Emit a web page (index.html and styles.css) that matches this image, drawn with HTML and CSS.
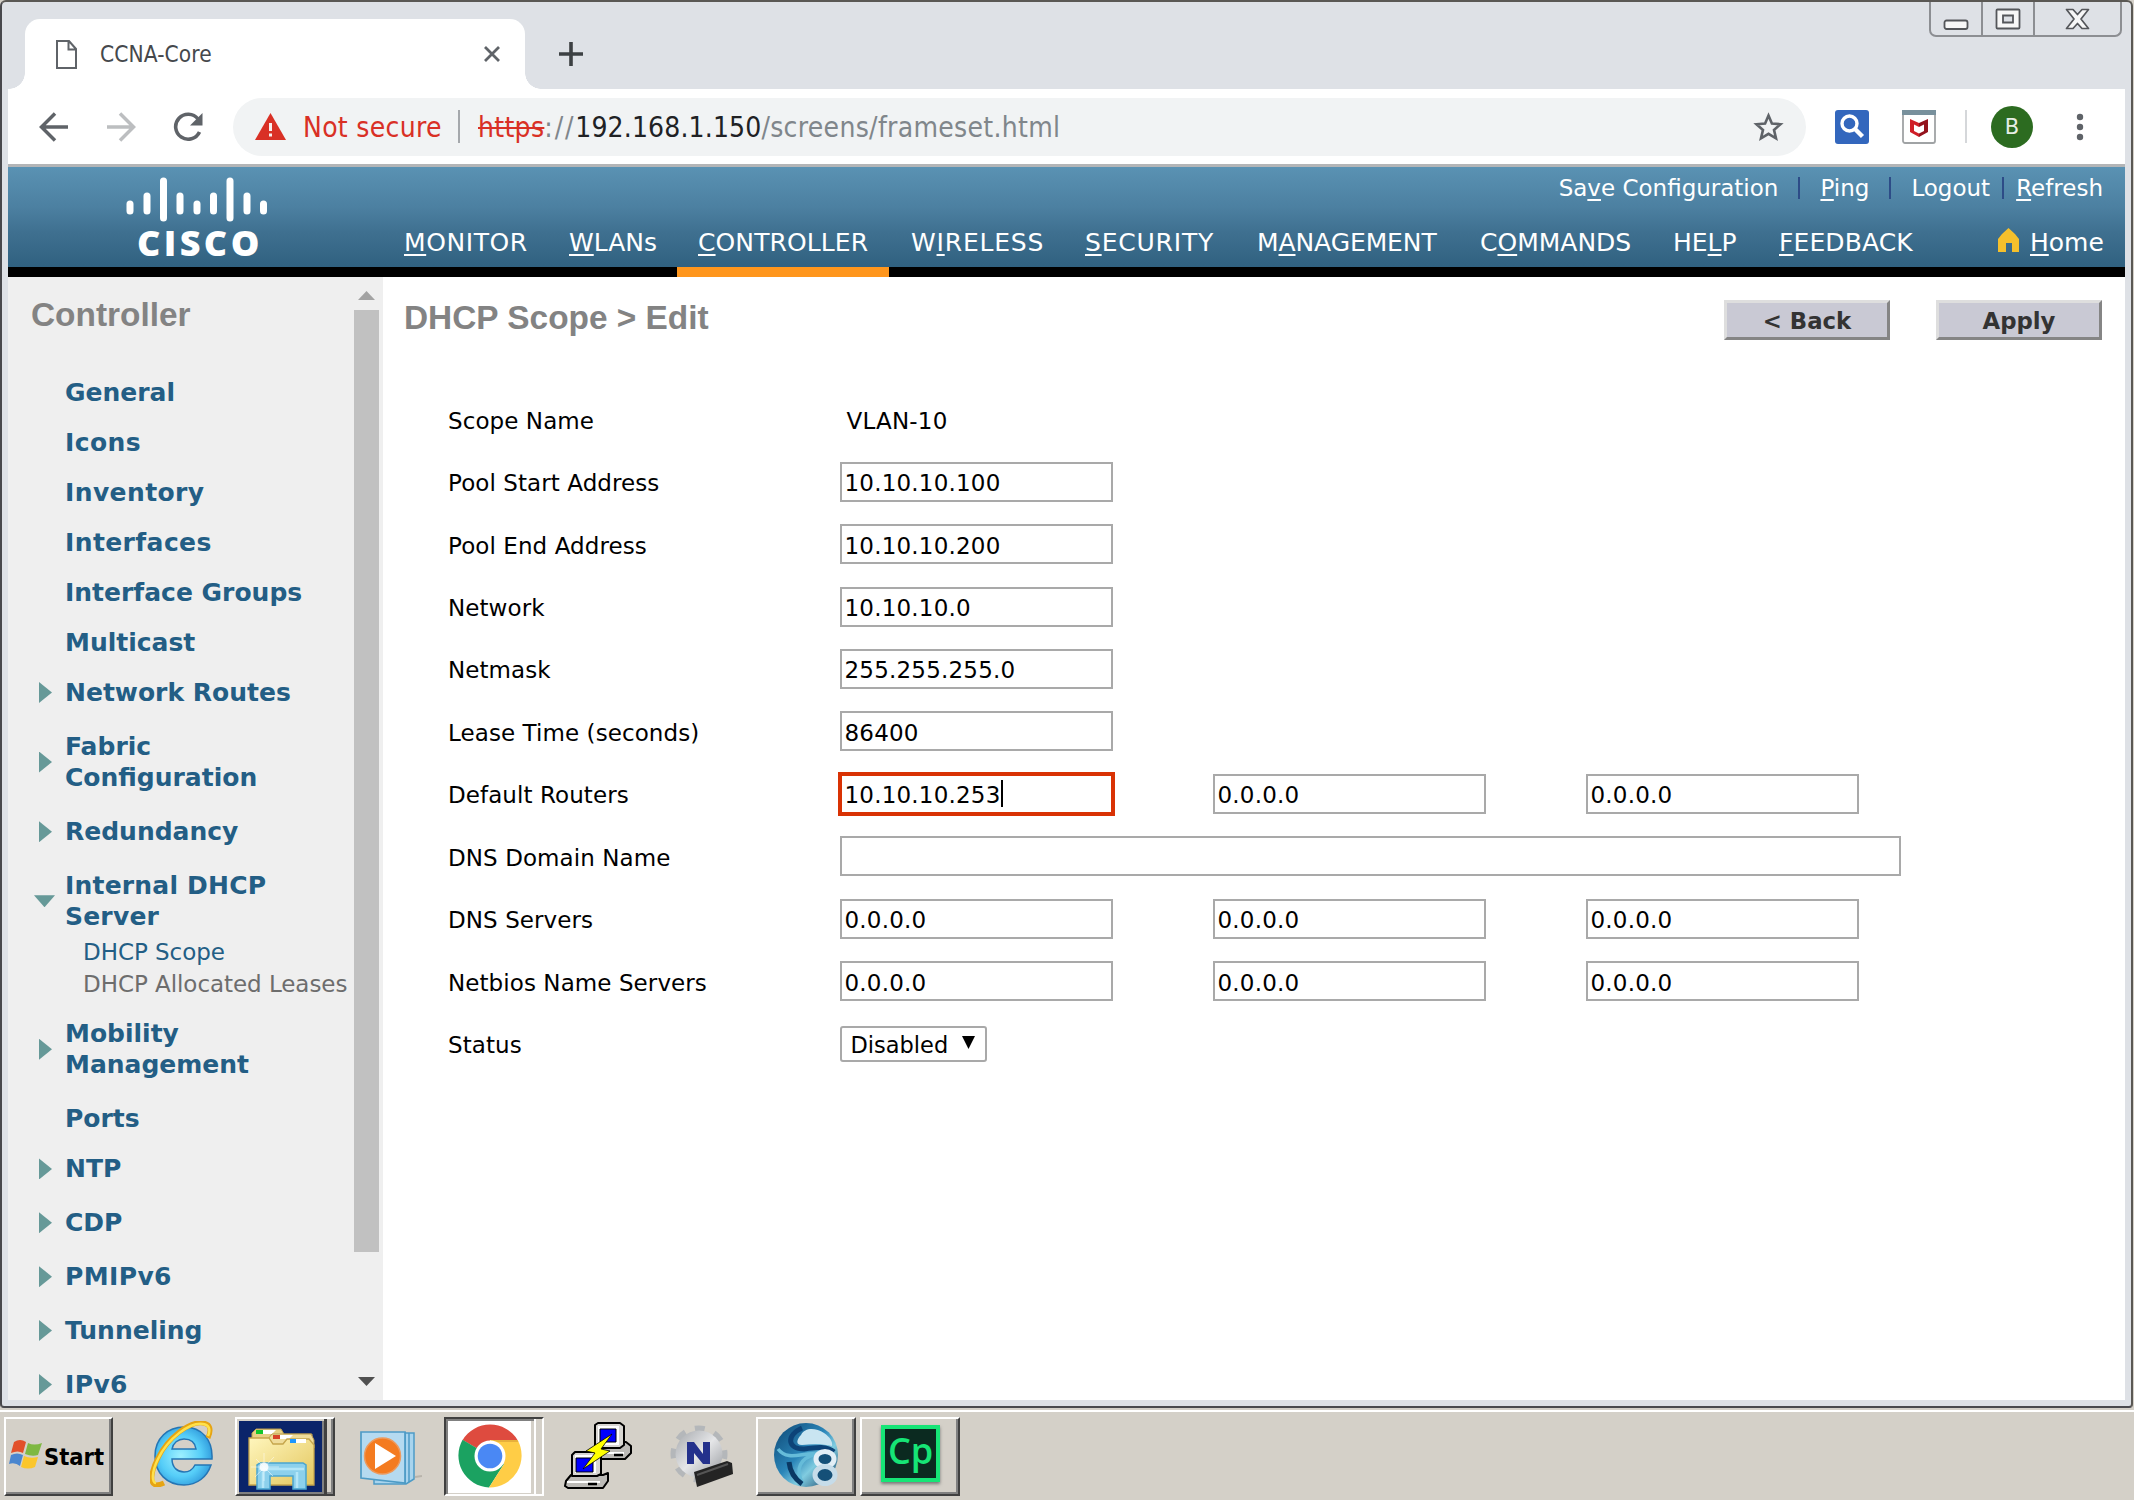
FILE: index.html
```html
<!DOCTYPE html>
<html lang="en">
<head>
<meta charset="utf-8">
<title>CCNA-Core</title>
<link rel="stylesheet" href="styles.css">
</head>
<body>
<div class="window">
  <div class="tabstrip">
    <div class="tab">
      <svg class="doc-icon" width="21" height="29" viewBox="0 0 21 29"><path d="M1 1H13L20 9V28H1ZM12.5 1V9.500H20" fill="none" stroke="#5f6368" stroke-width="2"/></svg>
      <span class="tab-title">CCNA-Core</span>
      <svg class="tab-close" width="18" height="18" viewBox="0 0 18 18"><path d="M2 2L16 16M16 2L2 16" stroke="#5f6368" stroke-width="2.800"/></svg>
    </div>
    <svg class="new-tab" width="26" height="26" viewBox="0 0 26 26"><path d="M13 1V25M1 13H25" stroke="#3c4043" stroke-width="3.600"/></svg>
    <div class="controls">
      <div class="ctl ctl-min"><svg width="26" height="12" viewBox="0 0 26 12"><rect x="1.500" y="1.500" width="23" height="8.500" rx="2" fill="#f7f7f7" stroke="#54565a" stroke-width="1.800"/></svg></div>
      <div class="ctl ctl-max"><svg width="26" height="22" viewBox="0 0 26 22"><path d="M1.500 2.500Q1.500 1.500 2.500 1.500H23.500Q24.500 1.500 24.500 2.500V19.500Q24.500 20.500 23.500 20.500H2.500Q1.500 20.500 1.500 19.500ZM8 7.500V14.500H18V7.500Z" fill="#f7f7f7" fill-rule="evenodd" stroke="#54565a" stroke-width="1.800"/></svg></div>
      <div class="ctl ctl-close"><svg width="25" height="22" viewBox="0 0 25 22"><path d="M1.500 1.500H8L12.500 6.500L17 1.500H23.500L16 11L23.500 20.500H17L12.500 15.500L8 20.500H1.500L9 11Z" fill="#f7f7f7" stroke="#54565a" stroke-width="1.700" stroke-linejoin="round"/></svg></div>
    </div>
  </div>

  <div class="toolbar">
    <svg class="tb-icon" width="30" height="30" viewBox="0 0 30 30"><path d="M29 15H3M16 1.500L2.500 15L16 28.500" fill="none" stroke="#5f6368" stroke-width="3.500"/></svg>
    <svg class="tb-icon tb-forward" width="30" height="30" viewBox="0 0 30 30"><path d="M1 15H27M14 1.500L27.500 15L14 28.500" fill="none" stroke="#bcbec0" stroke-width="3.500"/></svg>
    <svg class="tb-icon" width="30" height="30" viewBox="0 0 30 30"><path d="M26.500 20A12.500 12.500 0 1 1 25 7" fill="none" stroke="#5f6368" stroke-width="3.600"/><path d="M29.500 1V13.500H17Z" fill="#5f6368"/></svg>
    <div class="omnibox">
      <svg width="31" height="27" viewBox="0 0 31 27"><path d="M15.500 0L31 27H0Z" fill="#d93025"/><path d="M15.500 10V18M15.500 20.500V23.500" stroke="#f8f0ef" stroke-width="3"/></svg>
      <span class="not-secure">Not secure</span>
      <span class="omni-sep"></span>
      <span class="url"><s>https</s><span class="scheme-sep">://</span><b>192.168.1.150</b>/screens/frameset.html</span>
      <svg class="star" width="31" height="30" viewBox="0 0 31 30"><path d="M15.500 3.500L18.900 11.500L27.500 12.200L21 17.900L23 26.300L15.500 21.800L8 26.300L10 17.900L3.500 12.200L12.100 11.500Z" fill="none" stroke="#5f6368" stroke-width="2.600"/></svg>
    </div>
    <svg class="ext-search" width="34" height="34" viewBox="0 0 34 34"><rect width="34" height="34" rx="3" fill="#3367bd"/><circle cx="14.500" cy="13.500" r="7.500" fill="none" stroke="#fff" stroke-width="3.400"/><path d="M19.500 18.500L27.500 26.500" stroke="#fff" stroke-width="4.500"/></svg>
    <svg class="ext-shield" width="34" height="34" viewBox="0 0 34 34"><rect x="1" y="1" width="32" height="32" rx="2" fill="#fff" stroke="#a0a3a5" stroke-width="1.800"/><rect width="34" height="5" fill="#78909c"/><path d="M8 9L17 13V17L12 14.500V21L17 23.500V27L8 22Z" fill="#d01f28"/><path d="M26 9L17 13V17L22 14.500V21L17 23.500V27L26 22Z" fill="#94131d"/></svg>
    <span class="tb-sep"></span>
    <span class="avatar">B</span>
    <svg class="kebab" width="8" height="30" viewBox="0 0 8 30"><circle cx="4" cy="5" r="3.200" fill="#5f6368"/><circle cx="4" cy="15" r="3.200" fill="#5f6368"/><circle cx="4" cy="25" r="3.200" fill="#5f6368"/></svg>
  </div>

  <header class="banner">
    <div class="logo">
      <svg width="142" height="46" viewBox="0 0 142 46"><g stroke="#fff" stroke-width="7" stroke-linecap="round"><path d="M4 27V34M21 19V34M37.500 4V41M54 19V34M71 27V34M87.500 19V34M104 4V41M121 19V34M137.500 27V34"/></g></svg>
      <span class="logo-name">CISCO</span>
    </div>
    <div class="banner-main">
      <div class="util">
        <a>Sa<u>v</u>e Configuration</a><i></i><a><u>P</u>ing</a><i></i><a>Logout</a><i class="tight"></i><a><u>R</u>efresh</a>
      </div>
      <nav class="menu">
        <a class="m-monitor"><u>M</u>ONITOR</a>
        <a class="m-wlans"><u>W</u>LANs</a>
        <a class="m-controller"><u>C</u>ONTROLLER</a>
        <a class="m-wireless">W<u>I</u>RELESS</a>
        <a class="m-security"><u>S</u>ECURITY</a>
        <a class="m-management">M<u>A</u>NAGEMENT</a>
        <a class="m-commands">C<u>O</u>MMANDS</a>
        <a class="m-help">HE<u>L</u>P</a>
        <a class="m-feedback"><u>F</u>EEDBACK</a>
        <svg class="home-icon" width="21" height="24" viewBox="0 0 21 24"><path d="M10.500 0L17 6L21 11V24H14V15H8V24H0V11L4 6Z" fill="#f5c02c"/></svg>
        <a class="m-home"><u>H</u>ome</a>
      </nav>
    </div>
  </header>
  <div class="rule"><span class="rule-active"></span></div>

  <div class="frames">
    <aside class="sidebar">
      <div class="side-body">
        <h2>Controller</h2>
        <ul class="tree">
          <li>General</li>
          <li class="loose">Icons</li>
          <li class="loose">Inventory</li>
          <li class="loose">Interfaces</li>
          <li>Interface Groups</li>
          <li>Multicast</li>
          <li class="closed">Network Routes</li>
          <li class="closed">Fabric<br>Configuration</li>
          <li class="closed">Redundancy</li>
          <li class="open">Internal DHCP<br>Server</li>
          <li class="sub"><a>DHCP Scope</a><a class="dim">DHCP Allocated Leases</a></li>
          <li class="closed">Mobility<br>Management</li>
          <li>Ports</li>
          <li class="closed">NTP</li>
          <li class="closed">CDP</li>
          <li class="closed loose">PMIPv6</li>
          <li class="closed">Tunneling</li>
          <li class="closed loose">IPv6</li>
        </ul>
      </div>
      <div class="scrollbar">
        <span class="arrow-up"></span>
        <span class="thumb"></span>
        <span class="arrow-down"></span>
      </div>
    </aside>
    <main class="content">
      <div class="title-row">
        <h1>DHCP Scope &gt; Edit</h1>
        <button>&lt; Back</button>
        <button>Apply</button>
      </div>
      <div class="form">
        <div class="row"><label>Scope Name</label><span class="plain">VLAN-10</span></div>
        <div class="row"><label>Pool Start Address</label><div class="field">10.10.10.100</div></div>
        <div class="row"><label>Pool End Address</label><div class="field">10.10.10.200</div></div>
        <div class="row"><label>Network</label><div class="field">10.10.10.0</div></div>
        <div class="row"><label>Netmask</label><div class="field">255.255.255.0</div></div>
        <div class="row"><label>Lease Time (seconds)</label><div class="field">86400</div></div>
        <div class="row"><label>Default Routers</label><div class="field focus">10.10.10.253<span class="caret"></span></div><div class="field">0.0.0.0</div><div class="field">0.0.0.0</div></div>
        <div class="row"><label>DNS Domain Name</label><div class="field wide"></div></div>
        <div class="row"><label>DNS Servers</label><div class="field">0.0.0.0</div><div class="field">0.0.0.0</div><div class="field">0.0.0.0</div></div>
        <div class="row"><label>Netbios Name Servers</label><div class="field">0.0.0.0</div><div class="field">0.0.0.0</div><div class="field">0.0.0.0</div></div>
        <div class="row"><label>Status</label><div class="select">Disabled<svg width="13" height="13" viewBox="0 0 13 13"><path d="M0 0H13L6.500 13Z" fill="#000"/></svg></div></div>
      </div>
    </main>
  </div>
</div>

<footer class="taskbar">
  <div class="start raised">
    <svg width="33" height="30" viewBox="0 0 33 30">
      <path d="M5 3Q11-1 17 3L14 14Q9 11 2 14Z" fill="#e2502a"/>
      <path d="M19 4Q25 7 33 4L29 16Q23 18 16 15Z" fill="#7eb842"/>
      <path d="M2 16Q8 13 14 16L11 27Q6 23 0 25Z" fill="#4a86cf"/>
      <path d="M15 17Q21 20 29 18L26 28Q19 31 12 28Z" fill="#fbc62c"/>
    </svg>
    <span>Start</span>
  </div>
  <svg class="ie" width="63" height="66" viewBox="0 0 63 66">
    <defs><radialGradient id="ieBlue" cx=".45" cy=".5" r=".6"><stop offset="0" stop-color="#9df0ff"/><stop offset=".6" stop-color="#55cdf8"/><stop offset="1" stop-color="#2b93d8"/></radialGradient></defs>
    <path d="M62 38H22C22 47 28 51 34 51C39 51 43 48 45 44H61C57 56 47 64 34 64C17 64 5 52 5 35C5 17 18 6 34 6C52 6 63 19 62 38ZM22 28H46C45 21 40 18 34 18C28 18 23 22 22 28Z" fill="url(#ieBlue)" stroke="#2575b4" stroke-width="1.500" fill-rule="evenodd"/>
    <path d="M58 17C62 8 60 3 53 2C40 0 18 16 8 37C0 52 0 63 6 64C10 64 12 63 14 62" fill="none" stroke="#e6a413" stroke-width="5"/>
    <path d="M58 15C61 8 59 4 53 3C40 1 18 17 8 38C1 52 2 62 6 62" fill="none" stroke="#ffe14a" stroke-width="2.500"/>
  </svg>
  <div class="group explorer">
    <div class="navy">
      <svg width="68" height="62" viewBox="0 0 68 62">
        <defs><linearGradient id="folder" x2="1" y2="1"><stop offset="0" stop-color="#fff6bd"/><stop offset="1" stop-color="#e3c65d"/></linearGradient></defs>
        <path d="M4 5L8 1H33L36 6H64V20H4Z" fill="#e5cf85" stroke="#b99b4e"/>
        <rect x="8" y="2" width="7" height="4" fill="#12c72b"/><path d="M15 2H28L24 6H15Z" fill="#fff"/>
        <path d="M20 11L24 6H63L66 12V20H20Z" fill="#efdc9a" stroke="#b99b4e"/>
        <rect x="25" y="7" width="7" height="4" fill="#d7432a"/><path d="M32 7H45L41 11H32Z" fill="#fff"/>
        <path d="M1 10H21L25 16H35L39 11H61L66 17V57H1Z" fill="url(#folder)" stroke="#c5a54c" stroke-width="1.300"/>
        <rect x="42" y="11" width="6" height="4" fill="#1c96ff"/><rect x="48" y="11" width="10" height="4" fill="#fff"/>
        <path d="M9 61V37L12 35H55L58 37V61H45V48H22V61Z" fill="#8cd0ec" stroke="#4aa5cf" stroke-width="1.500"/>
        <path d="M11 41H56M15 44V60M49 44V60" stroke="#b4e6f8" stroke-width="2.500" fill="none"/>
        <path d="M16 25V53M3 39H31M7 49L26 29M8 31L25 48" stroke="#fff" stroke-width="1" opacity=".5"/>
        <circle cx="16" cy="39" r="4.500" fill="#fff" opacity=".85"/>
      </svg>
    </div>
  </div>
  <svg class="wmp" width="62" height="54" viewBox="0 0 62 54">
    <path d="M14 2H54V48L46 53H14Z" fill="#a8d4ee" stroke="#4d9bc6" stroke-width="1.500"/>
    <path d="M49 2V51M45 1V53" stroke="#4d9bc6" stroke-width="1.500"/>
    <path d="M1 1H45V52L1 47Z" fill="#b5daf0" stroke="#4d9bc6" stroke-width="1.700"/>
    <circle cx="22.500" cy="25" r="18" fill="#f47b20" stroke="#ed9a5d" stroke-width="1.500"/>
    <path d="M15 12L36 25L15 38Z" fill="#fff"/><path d="M55 46L62 45" stroke="#b8b4ac" stroke-width="2"/>
  </svg>
  <div class="group pressed">
    <div class="white">
      <svg width="64" height="64" viewBox="0 0 64 64">
        <path d="M32 32L4.700 16A32 32 0 0 1 59.500 16H32Z" fill="#de4b3f"/>
        <path d="M32 32L4.600 15.700A32 32 0 0 0 31 63.500L46 40Z" fill="#1ba261"/>
        <path d="M32 16H59.600A32 32 0 0 1 31 63.500L46 40Z" fill="#ffcd46"/>
        <path d="M32 16H59.600L60.500 18H40Z" fill="#c98d2e" opacity=".45"/>
        <circle cx="32" cy="32" r="15.500" fill="#fff"/><circle cx="32" cy="32" r="12.300" fill="#4a88f4"/>
      </svg>
    </div>
  </div>
  <svg class="putty" width="68" height="68" viewBox="0 0 68 68" stroke="#000" stroke-width="2" stroke-linejoin="round">
    <path d="M31 25L36 20H62L67 24V31L61 37H31Z" fill="#bdbbb7"/>
    <path d="M31 3L34 1H56L60 4V23L56 26H31Z" fill="#d8d6d2"/>
    <path d="M34 4H55V23H34Z" fill="#fff" stroke="none"/><path d="M36 7H52V20H36Z" fill="#00f" stroke="#000" stroke-width="1"/>
    <path d="M2 59L7 53H39L44 51V59L39 66H4L1 64Z" fill="#bdbbb7"/>
    <path d="M8 33L11 30H33L37 33V52L33 54H8Z" fill="#d8d6d2"/>
    <path d="M11 33H32V51H11Z" fill="#fff" stroke="none"/><path d="M12 36H29V50H12Z" fill="#00f" stroke="#000" stroke-width="1"/>
    <path d="M3 60H36M33 31H60" stroke="#fff" fill="none"/><path d="M24 62H33M50 33H59" stroke="#000" stroke-width="2.500"/>
    <path d="M48 12L22 29L31 31L19 47L46 29L37 27Z" fill="#ff0" stroke="#000" stroke-width=".8"/>
  </svg>
  <svg class="gear" width="63" height="62" viewBox="0 0 63 62">
    <defs><linearGradient id="steel" x2="1" y2="1"><stop offset="0" stop-color="#a4a7ab"/><stop offset=".5" stop-color="#e5e6e8"/><stop offset="1" stop-color="#96999e"/></linearGradient></defs>
    <circle cx="29" cy="29" r="25.500" fill="none" stroke="#b4b7ba" stroke-width="6" stroke-dasharray="10 10.030" stroke-dashoffset="5"/>
    <circle cx="29" cy="29" r="23.500" fill="url(#steel)"/>
    <path d="M17 39V17H24L33 29V17H40V39H33L24 28V39Z" fill="#24318c"/>
    <path d="M24 47L57 36L62 38L63 49L27 62Z" fill="#242424"/><path d="M27 50L58 39" stroke="#555" stroke-width="2"/>
  </svg>
  <div class="app raised snagit">
    <svg width="67" height="66" viewBox="0 0 67 66">
      <defs><linearGradient id="ball" x2="1" y2="1"><stop offset="0" stop-color="#0d4673"/><stop offset=".45" stop-color="#2a85b8"/><stop offset=".65" stop-color="#80cce0"/><stop offset="1" stop-color="#0b3158"/></linearGradient></defs>
      <circle cx="33" cy="33" r="32" fill="url(#ball)"/>
      <path d="M28 13C32 5 43 6 51 11C57 15 60 20 59 24C51 22 40 22 29 23C22 23 24 17 28 13Z" fill="#c9e5f1"/>
      <path d="M29 6C13 13 14 27 31 27C44 25 54 24 61 30" fill="none" stroke="#0c4378" stroke-width="5"/>
      <path d="M5 27C15 40 30 30 43 32C28 36 21 46 30 62" fill="none" stroke="#66bcd9" stroke-width="3.500"/>
      <path d="M16 40C17 50 22 57 29 62" fill="none" stroke="#0a3863" stroke-width="5"/>
      <ellipse cx="52" cy="37" rx="9" ry="7.500" fill="#155078" stroke="#e2eef6" stroke-width="5"/>
      <ellipse cx="52" cy="53" rx="10" ry="8.500" fill="#155078" stroke="#c6dce9" stroke-width="5"/>
    </svg>
  </div>
  <div class="app raised captivate"><span class="cp">Cp</span></div>
</footer>
</body>
</html>
```
FILE: styles.css
```css
* { box-sizing: border-box; }
body {
  margin: 0;
  width: 2134px;
  height: 1500px;
  overflow: hidden;
  background: #d4d0c8;
  font-family: "DejaVu Sans", Verdana, sans-serif;
  font-size: 23px;
}
svg { display: block; flex: none; }

.window {
  width: 2133px;
  height: 1408px;
  border: 2px solid #5a5854;
  border-left-color: #48484c;
  border-bottom-color: #4a4a4e;
  border-radius: 6px 6px 4px 4px;
  background: #dee1e6;
  padding: 0 6px 6px;
  display: flex;
  flex-direction: column;
}

/* Tab strip */
.tabstrip { height: 87px; display: flex; align-items: flex-start; }
.tab {
  position: relative;
  width: 500px;
  height: 70px;
  margin: 17px 0 0 17px;
  padding: 0 24px 0 31px;
  background: #fff;
  border-radius: 15px 15px 0 0;
  display: flex;
  align-items: center;
}
.tab::before, .tab::after {
  content: "";
  position: absolute;
  bottom: 0;
  width: 16px;
  height: 16px;
}
.tab::before { left: -16px; background: radial-gradient(circle at 0 0, #dee1e6 15.5px, #fff 16px); }
.tab::after { right: -16px; background: radial-gradient(circle at 100% 0, #dee1e6 15.5px, #fff 16px); }
.tab-title {
  flex: 1;
  margin-left: 23px;
  font-family: "DejaVu Sans Condensed", "DejaVu Sans", sans-serif;
  font-stretch: condensed;
  font-size: 22.5px;
  letter-spacing: .1px;
  color: #45484c;
}
.new-tab { margin: 39px 0 0 33px; }
.controls {
  display: flex;
  width: 193px;
  height: 35px;
  margin: 0 3px 0 auto;
  border: 2px solid #8c8e92;
  border-top: 0;
  border-radius: 0 0 7px 7px;
}
.ctl { display: flex; justify-content: center; padding-top: 6px; }
.ctl-min { width: 50px; padding-top: 17px; }
.ctl-max { width: 54px; border: solid #8c8e92; border-width: 0 2px; }
.ctl-close { flex: 1; }

/* Toolbar */
.toolbar {
  height: 78px;
  padding: 0 0 0 31px;
  background: #fff;
  border-bottom: 3px solid #b3b5b7;
  display: flex;
  align-items: center;
}
.tb-icon { margin-right: 37px; }
.omnibox {
  width: 1573px;
  height: 58px;
  margin-left: -7px;
  padding: 0 22px;
  border-radius: 29px;
  background: #f1f3f4;
  display: flex;
  align-items: center;
  font-family: "DejaVu Sans Condensed", "DejaVu Sans", sans-serif;
  font-stretch: condensed;
  font-size: 28px;
}
.not-secure { width: 155px; margin-left: 17px; padding-top: 2px; color: #d93025; letter-spacing: .3px; white-space: nowrap; }
.omni-sep { width: 2px; height: 33px; background: #a5a8ac; }
.url { margin-left: 18px; padding-top: 2px; color: #80868b; letter-spacing: .3px; white-space: nowrap; }
.url s { color: #d93025; }
.scheme-sep { letter-spacing: 1.8px; }
.url b { font-weight: 400; color: #202124; letter-spacing: .15px; }
.star { margin-left: auto; }
.ext-search { margin-left: 29px; }
.ext-shield { margin-left: 33px; }
.tb-sep { width: 2px; height: 33px; margin-left: 29px; background: #d5d7da; }
.avatar {
  width: 42px;
  height: 42px;
  margin-left: 24px;
  border-radius: 50%;
  background: #2c6b20;
  color: #e6eee4;
  font-size: 21px;
  line-height: 43px;
  text-align: center;
}
.kebab { margin-left: 43px; }

/* Product banner */
.banner {
  height: 100px;
  display: flex;
  background: linear-gradient(#5a92b3, #4c80a1 40%, #3f7090 65%, #306180);
  color: #fff;
}
.logo { width: 396px; padding: 10px 0 0 118px; }
.logo-name {
  display: block;
  margin: 2px 0 0 11px;
  font: 800 36px/36px "Open Sans", "Noto Sans", sans-serif;
  letter-spacing: 3.4px;
}
.banner-main { flex: 1; }
.util {
  height: 41px;
  padding-right: 22px;
  display: flex;
  justify-content: flex-end;
  align-items: center;
}
.util i { width: 2px; height: 22px; margin: 0 20px; background: #2d4c87; }
.util i.tight { margin: 0 12px; }
u { text-decoration-thickness: 2px; text-underline-offset: 3px; text-decoration-skip-ink: none; }
.menu { display: flex; height: 69px; align-items: center; font-size: 25px; white-space: nowrap; }
.menu a { flex: none; }
.m-monitor { width: 165px; letter-spacing: .6px; }
.m-wlans { width: 129px; }
.m-controller { width: 213px; letter-spacing: .1px; }
.m-wireless { width: 174px; letter-spacing: .8px; }
.m-security { width: 172px; letter-spacing: .8px; }
.m-management { width: 223px; letter-spacing: -.1px; }
.m-commands { width: 193px; }
.m-help { width: 106px; }
.m-feedback { width: 219px; letter-spacing: .1px; }
.home-icon { margin-right: 11px; margin-top: -6px; }
.rule { height: 10px; background: #000; display: flex; padding-left: 669px; }
.rule-active { width: 212px; background: #ff961d; }

/* Sidebar */
.frames { height: 1123px; display: flex; background: #fff; }
.sidebar { width: 375px; background: #efefef; display: flex; overflow: hidden; }
.side-body { width: 346px; height: 1123px; overflow: hidden; white-space: nowrap; }
h1, h2 { margin: 0; color: #838383; font: 700 33.4px/40px "Liberation Sans", Arial, sans-serif; }
h2 { padding: 18px 0 0 23px; }
.tree {
  list-style: none;
  margin: 42px 0 0;
  padding: 0 0 0 57px;
  font-size: 25px;
  font-weight: 700;
  line-height: 31.3px;
  color: #235e85;
}
.tree li { padding-bottom: 18.7px; }
.tree .loose { letter-spacing: .4px; }
.tree .closed, .tree .open { display: flex; align-items: center; margin-left: -26px; padding-bottom: 22.6px; }
.closed::before, .open::before { content: ""; flex: none; }
.closed::before { width: 13px; height: 21px; margin-right: 13px; background: #669998; clip-path: polygon(0 0, 100% 50%, 0 100%); }
.open::before { width: 21px; height: 12px; margin: 0 10px 0 -5px; background: #669998; clip-path: polygon(0 0, 100% 0, 50% 100%); }
.tree .open { padding-bottom: 5px; letter-spacing: .2px; }
.tree .sub { padding: 0 0 18px 18px; font-size: 23px; font-weight: 400; }
.sub a { display: block; letter-spacing: -.05px; }
.sub .dim { color: #6d6d6d; }
.scrollbar { width: 25px; display: flex; flex-direction: column; align-items: center; }
.arrow-up, .arrow-down { width: 17px; height: 9px; }
.arrow-up { margin-top: 14px; background: #a3a3a3; clip-path: polygon(50% 0, 100% 100%, 0 100%); }
.thumb { width: 25px; height: 942px; margin-top: 10px; background: #c1c1c1; }
.arrow-down { margin-top: 125px; background: #505050; clip-path: polygon(0 0, 100% 0, 50% 100%); }

/* Scope form */
.content { flex: 1; }
.title-row { display: flex; align-items: flex-start; padding: 23px 23px 0 21px; }
h1 { flex: 1; margin-top: -2px; }
button {
  width: 166px;
  height: 40px;
  margin-left: 46px;
  padding: 2px 0 0;
  border: 3px solid;
  border-color: #dedede #858585 #858585 #dedede;
  background: #c9c9d4;
  color: #333;
  font: 700 22.8px "DejaVu Sans", sans-serif;
}
.form { padding: 48px 0 0 65px; }
.row { height: 62.45px; display: flex; align-items: center; color: #000; }
.row label { width: 391.5px; padding-top: 3px; letter-spacing: .08px; }
.plain { padding: 3px 0 0 7px; letter-spacing: .2px; }
.field {
  width: 273px;
  height: 40px;
  margin-right: 100px;
  padding: 3px 0 0 3px;
  border: 2px solid #a9a9a9;
  line-height: 34px;
  letter-spacing: .2px;
  display: flex;
  align-items: center;
}
.field.wide { width: 1061px; }
.field.focus { width: 277px; height: 44px; margin: 0 98px 0 -2px; border: 4px solid #d93204; }
.caret { width: 2px; height: 27px; margin-top: -3px; background: #000; }
.select {
  width: 147px;
  height: 36px;
  padding: 2px 0 0 9px;
  border: 2px solid #a9a9a9;
  border-radius: 3px;
  display: flex;
  align-items: center;
  font-size: 22.5px;
}
.select svg { margin: -4px 0 0 14px; }

/* Taskbar */
.taskbar {
  height: 92px;
  padding-left: 4px;
  background: linear-gradient(#d4d0c8 2px, #fff 2px, #fff 4px, #d4d0c8 4px);
  display: flex;
  align-items: flex-start;
}
.raised {
  border: 2px solid;
  border-color: #fff #404040 #404040 #fff;
  box-shadow: inset -2px -2px 0 #808080;
}
.start {
  width: 109px;
  height: 79px;
  margin-top: 9px;
  padding-left: 3px;
  display: flex;
  align-items: center;
  font: 700 23.5px "DejaVu Sans Condensed", "DejaVu Sans", sans-serif;
  font-stretch: condensed;
}
.start svg { margin: -6px 2px 0 0; }
.ie { margin: 13px 0 0 37px; }
.group { width: 100px; height: 79px; margin: 9px 0 0 22px; border: 2px solid; border-color: #fff #404040 #404040 #fff; }
.explorer { box-shadow: inset -2px -2px 0 #808080; }
.navy {
  width: 90px;
  height: 75px;
  padding: 9px 0 0 11px;
  border-right: 3px solid #404040;
  background: #0a246a;
  box-shadow: inset 2px 2px 0 #d4d0c8, inset -2px -2px 0 #808080;
}
.wmp { margin: 23px 0 0 25px; }
.pressed { border-color: #404040 #fff #fff #404040; }
.white {
  width: 90px;
  height: 75px;
  padding: 5px 0 0 12px;
  border-right: 2px solid #fff;
  background: #fff;
  box-shadow: inset 2px 2px 0 #808080, inset -3px -1px 0 #d4d0c8;
}
.putty { margin: 14px 0 0 20px; }
.gear { margin: 17px 0 0 38px; }
.app { width: 100px; height: 79px; margin: 9px 0 0 4px; }
.snagit { margin-left: 23px; padding: 3px 0 0 15px; }
.captivate { padding: 6px 0 0 19px; }
.cp {
  display: block;
  width: 59px;
  height: 57px;
  border: 4px solid #16e576;
  background: #0b2a20;
  box-shadow: 0 2px 3px #777;
  color: #16e576;
  font: 600 36px/44px "Open Sans", sans-serif;
  text-align: center;
}
```
